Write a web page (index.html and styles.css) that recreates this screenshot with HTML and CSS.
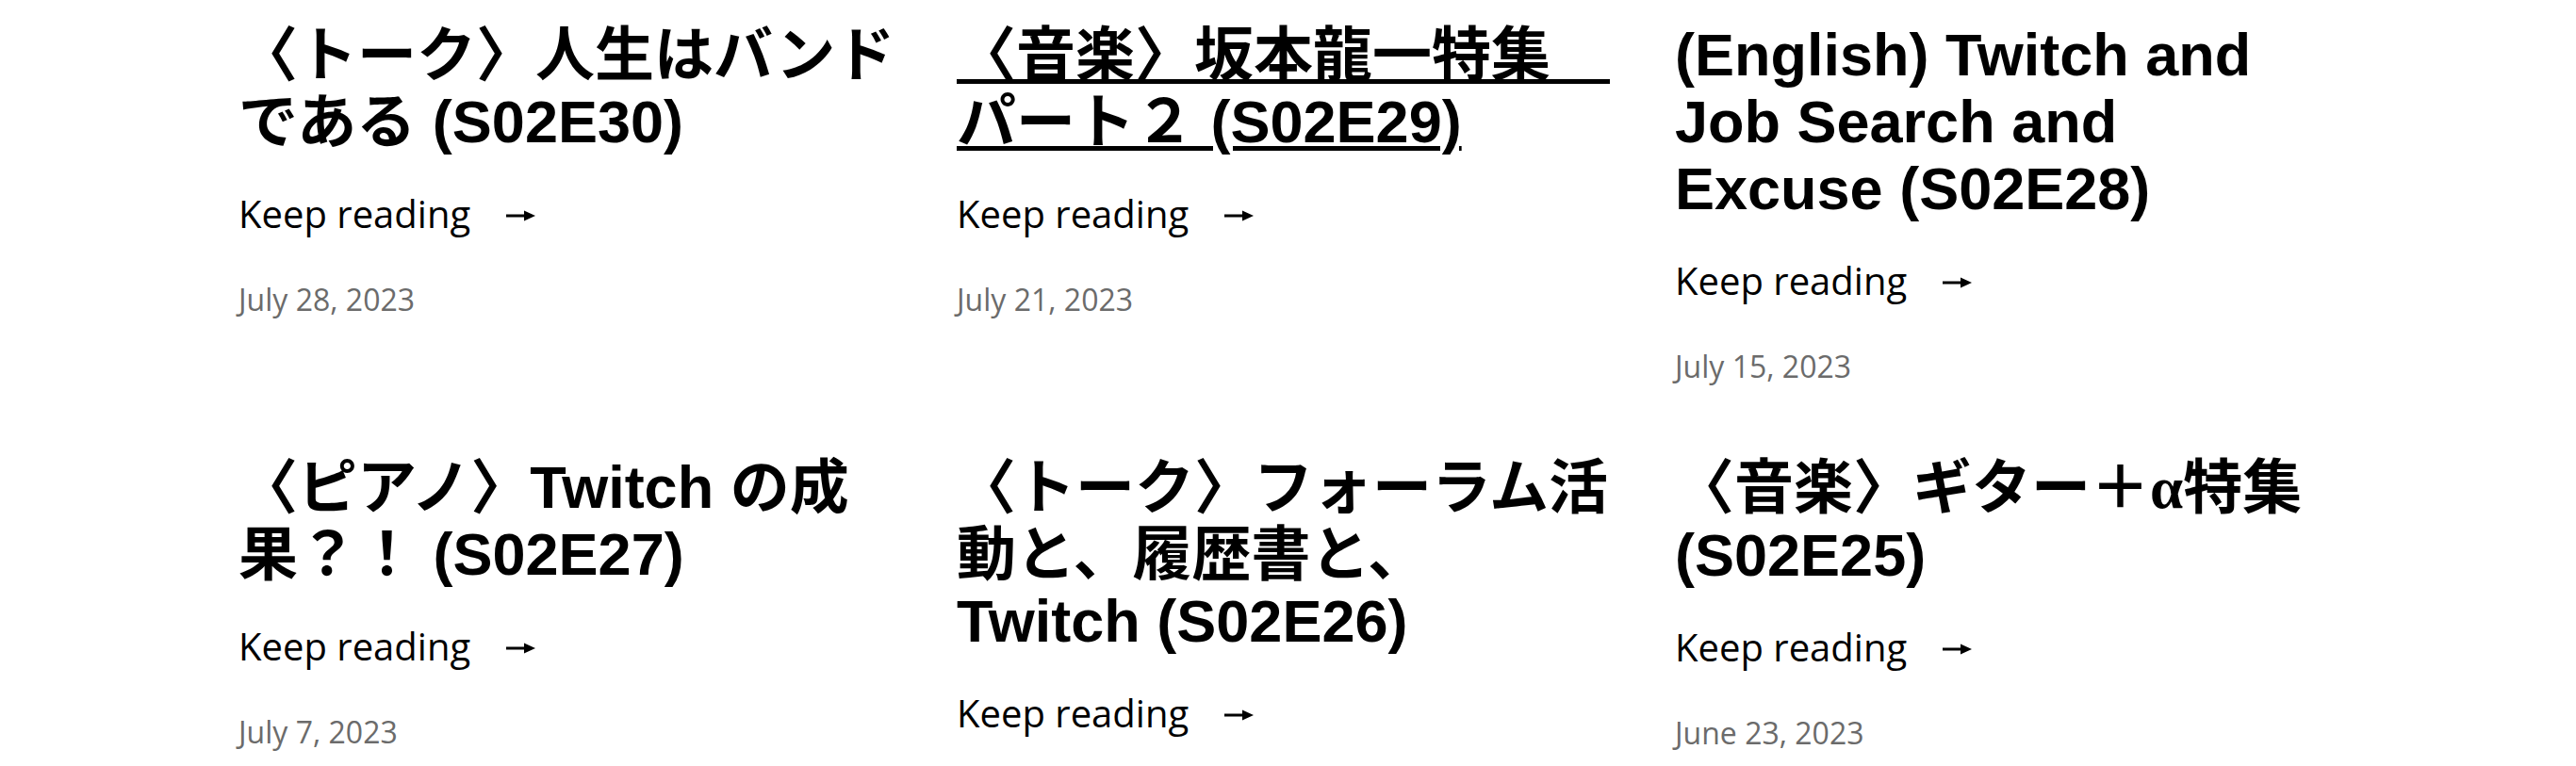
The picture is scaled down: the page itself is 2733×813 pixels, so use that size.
FILE: index.html
```html
<!DOCTYPE html>
<html lang="ja">
<head>
<meta charset="utf-8">
<title>Posts</title>
<link rel="stylesheet" href="styles.css">
</head>
<body>
<main class="posts">
  <article class="post">
    <h2 class="post-title"><a href="#">〈トーク〉人生はバンドである (S02E30)</a></h2>
    <p class="more"><a href="#">Keep reading<svg class="arrow" viewBox="0 0 31 14" width="31" height="14"><path d="M0 7H21" stroke="#000" stroke-width="3"/><path d="M19 1.5L31 7L19 12.5Z" fill="#000"/></svg></a></p>
    <p class="date">July 28, 2023</p>
  </article>
  <article class="post">
    <h2 class="post-title"><a href="#" class="hover">〈音楽〉坂本龍一特集　パート２ (S02E29)</a></h2>
    <p class="more"><a href="#">Keep reading<svg class="arrow" viewBox="0 0 31 14" width="31" height="14"><path d="M0 7H21" stroke="#000" stroke-width="3"/><path d="M19 1.5L31 7L19 12.5Z" fill="#000"/></svg></a></p>
    <p class="date">July 21, 2023</p>
  </article>
  <article class="post">
    <h2 class="post-title"><a href="#">(English) Twitch and Job Search and Excuse (S02E28)</a></h2>
    <p class="more"><a href="#">Keep reading<svg class="arrow" viewBox="0 0 31 14" width="31" height="14"><path d="M0 7H21" stroke="#000" stroke-width="3"/><path d="M19 1.5L31 7L19 12.5Z" fill="#000"/></svg></a></p>
    <p class="date">July 15, 2023</p>
  </article>
  <article class="post">
    <h2 class="post-title"><a href="#">〈ピアノ〉Twitch の成果？！ (S02E27)</a></h2>
    <p class="more"><a href="#">Keep reading<svg class="arrow" viewBox="0 0 31 14" width="31" height="14"><path d="M0 7H21" stroke="#000" stroke-width="3"/><path d="M19 1.5L31 7L19 12.5Z" fill="#000"/></svg></a></p>
    <p class="date">July 7, 2023</p>
  </article>
  <article class="post">
    <h2 class="post-title"><a href="#">〈トーク〉フォーラム活動と、履歴書と、<br>Twitch (S02E26)</a></h2>
    <p class="more"><a href="#">Keep reading<svg class="arrow" viewBox="0 0 31 14" width="31" height="14"><path d="M0 7H21" stroke="#000" stroke-width="3"/><path d="M19 1.5L31 7L19 12.5Z" fill="#000"/></svg></a></p>
    <p class="date">June 30, 2023</p>
  </article>
  <article class="post">
    <h2 class="post-title"><a href="#">〈音楽〉ギター＋<span class="greek">α</span>特集 (S02E25)</a></h2>
    <p class="more"><a href="#">Keep reading<svg class="arrow" viewBox="0 0 31 14" width="31" height="14"><path d="M0 7H21" stroke="#000" stroke-width="3"/><path d="M19 1.5L31 7L19 12.5Z" fill="#000"/></svg></a></p>
    <p class="date">June 23, 2023</p>
  </article>
</main>
</body>
</html>
```
FILE: styles.css
```css
html, body {
  margin: 0;
  padding: 0;
  background: #fff;
  color: #000;
}

body {
  overflow: hidden;
}

.posts {
  display: grid;
  grid-template-columns: repeat(3, 700px);
  column-gap: 62px;
  row-gap: 70px;
  padding: 23px 0 0 253px;
  align-items: start;
}

.post {
  margin: 0;
}

.post-title {
  margin: 0;
  font-family: "Liberation Sans", "Noto Sans CJK JP", sans-serif;
  font-weight: 700;
  font-size: 63px;
  line-height: 71px;
  text-spacing-trim: space-all;
  text-autospace: no-autospace;
}

.post-title a {
  color: #000;
  text-decoration: none;
}

.post-title a.hover {
  text-decoration: underline;
  text-decoration-thickness: 5px;
  text-underline-offset: 4px;
}

.greek {
  font-family: "Liberation Serif", serif;
}

.more {
  margin: 32px 0 0;
  font-family: "Open Sans", "Noto Sans", sans-serif;
  font-size: 40px;
  line-height: 60px;
}

.more a {
  color: #000;
  text-decoration: none;
}

.arrow {
  margin-left: 38px;
  vertical-align: middle;
  position: relative;
  top: -2px;
}

.date {
  margin: 38px 0 0;
  font-family: "Open Sans", "Noto Sans", sans-serif;
  font-size: 32px;
  line-height: 46px;
  color: #6b6b6b;
}
```
